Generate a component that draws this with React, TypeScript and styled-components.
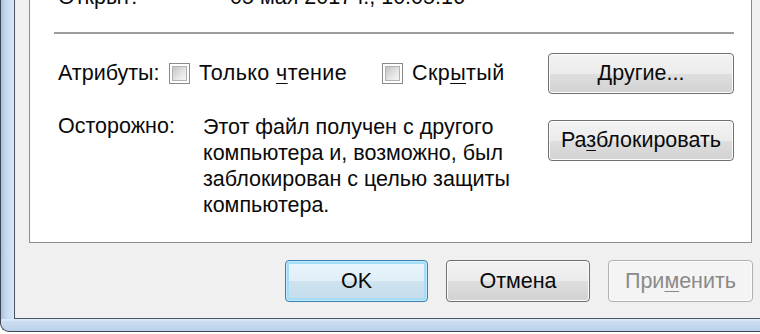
import React from "react";
import styled, { createGlobalStyle } from "styled-components";

const FONT = `"Liberation Sans", Arial, sans-serif`;

const Global = createGlobalStyle`
  html, body { margin: 0; padding: 0; background: #ffffff; overflow: hidden; }
  body { font-family: ${FONT}; color: #0a0a0a; }
`;

const Frame = styled.div`
  box-sizing: border-box;
  width: 800px;
  height: 332px;
  padding: 0 0 12px 13px;
  border-left: 1px solid #3d4650;
  border-bottom: 1px solid #3d4650;
  border-bottom-left-radius: 9px;
  background:
    linear-gradient(to bottom, #e2ecf8 0px, #c9dbf0 3px, #bcd1ea 12px) left bottom / 100% 12px no-repeat,
    linear-gradient(to right, #a8c0dd 0px, #c6d9f0 5px, #dbe7f6 13px) left top / 14px 100% no-repeat,
    #c9dbf1;
  display: flex;
`;

const Dialog = styled.div`
  flex: 1;
  display: flex;
  flex-direction: column;
  padding-left: 14px;
  background: #f0f0f0;
  border-left: 1px solid #4a5664;
  border-bottom: 1px solid #4a5664;
`;

const Panel = styled.div`
  box-sizing: border-box;
  width: 723px;
  height: 243px;
  flex: none;
  background: #ffffff;
  border: 1px solid #898c95;
  border-top: none;
  overflow: hidden;
  padding: 0 17px 0 28px;
  font-size: 21.5px;
  line-height: 25px;
`;

const InfoRow = styled.div`
  display: flex;
  margin-top: -15px;
  height: 25px;
`;

const Label = styled.div<{ $w: number }>`
  width: ${(p) => p.$w}px;
  flex: none;
  white-space: nowrap;
`;

const Separator = styled.div`
  height: 2px;
  margin: 22px 0 0 -4px;
  background: #9c9c9c;
`;

const AttrRow = styled.div`
  display: flex;
  align-items: center;
  height: 41px;
  margin-top: 19px;
`;

const Check = styled.label<{ $gap?: number }>`
  display: flex;
  align-items: center;
  gap: 9px;
  margin-left: ${(p) => p.$gap ?? 0}px;
  white-space: nowrap;
  letter-spacing: 0.4px;
`;

const Box = styled.span`
  box-sizing: border-box;
  width: 21px;
  height: 21px;
  flex: none;
  display: flex;
  padding: 2px;
  border: 1px solid #8a8a8a;
  background: #ffffff;
  &::after {
    content: "";
    flex: 1;
    border: 1px solid #b2b2b2;
    background: linear-gradient(135deg, #c4c4c4 0%, #e6e6e6 60%, #f6f6f6 100%);
  }
`;

const Accel = styled.span`
  text-decoration: underline;
  text-underline-offset: 3px;
  text-decoration-thickness: 1px;
`;

const WarnRow = styled.div`
  display: flex;
  align-items: flex-start;
  margin-top: 20px;
`;

const WarnText = styled.div`
  flex: none;
  line-height: 26px;
  white-space: nowrap;
`;

const Button = styled.button<{ $variant?: "normal" | "default" | "disabled"; $w?: number; $h?: number }>`
  box-sizing: border-box;
  flex: none;
  width: ${(p) => p.$w ?? 144}px;
  height: ${(p) => p.$h ?? 42}px;
  padding: 0;
  border-radius: 4px;
  font-family: ${FONT};
  font-size: 21.5px;
  line-height: 25px;
  color: ${(p) => (p.$variant === "disabled" ? "#8a8a8a" : "#0a0a0a")};
  border: 1px solid
    ${(p) => (p.$variant === "default" ? "#3c7fb1" : p.$variant === "disabled" ? "#adb2b5" : "#707070")};
  background: ${(p) =>
    p.$variant === "default"
      ? "linear-gradient(to bottom, #eaf5fb 0%, #e0eef7 50%, #cfe3ef 51%, #c3dcec 100%)"
      : p.$variant === "disabled"
      ? "#f4f4f4"
      : "linear-gradient(to bottom, #f3f3f3 0%, #ebebeb 50%, #dedede 51%, #d2d2d2 100%)"};
  box-shadow: ${(p) =>
    p.$variant === "default"
      ? "inset 0 0 0 1px #bdeaff, inset 0 0 0 3px #a6ddf6"
      : "inset 0 0 0 1px #fbfbfb"};
`;

const Push = styled.div<{ $top?: number }>`
  margin-left: auto;
  margin-top: ${(p) => p.$top ?? 0}px;
`;

const ButtonRow = styled.div`
  width: 724px;
  display: flex;
  justify-content: flex-end;
  gap: 18px;
  margin-top: 17px;
`;

export default function App() {
  return (
    <>
      <Global />
      <Frame>
        <Dialog>
          <Panel>
            <InfoRow>
              <Label $w={172}>Открыт:</Label>
              <div>05 мая 2017 г., 10:05:16</div>
            </InfoRow>
            <Separator />
            <AttrRow>
              <Label $w={111}>Атрибуты:</Label>
              <Check>
                <Box />
                <span>
                  Только <Accel>ч</Accel>тение
                </span>
              </Check>
              <Check $gap={35}>
                <Box />
                <span>
                  Скр<Accel>ы</Accel>тый
                </span>
              </Check>
              <Push>
                <Button $w={186} $h={41}>
                  <Accel>Д</Accel>ругие...
                </Button>
              </Push>
            </AttrRow>
            <WarnRow>
              <Label $w={145}>Осторожно:</Label>
              <WarnText>
                Этот файл получен с другого
                <br />
                компьютера и, возможно, был
                <br />
                заблокирован с целью защиты
                <br />
                компьютера.
              </WarnText>
              <Push $top={6}>
                <Button $w={186} $h={41}>
                  Ра<Accel>з</Accel>блокировать
                </Button>
              </Push>
            </WarnRow>
          </Panel>
          <ButtonRow>
            <Button $variant="default" $w={143}>
              OK
            </Button>
            <Button>Отмена</Button>
            <Button $variant="disabled" $w={145}>
              При<Accel>м</Accel>енить
            </Button>
          </ButtonRow>
        </Dialog>
      </Frame>
    </>
  );
}
